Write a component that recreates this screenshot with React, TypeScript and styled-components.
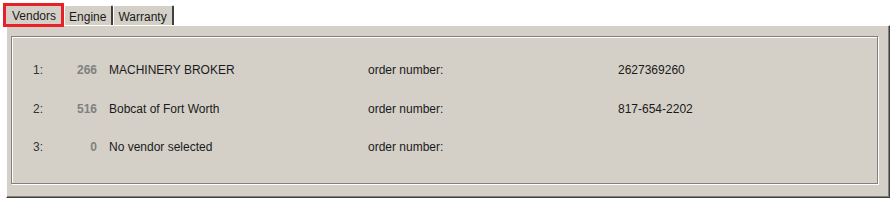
import React from 'react';
import styled, { createGlobalStyle } from 'styled-components';

const FACE = '#d4d0c8';
const SHADOW = '#808080';
const DARK = '#404040';

const GlobalStyle = createGlobalStyle`
    html, body {
        margin: 0;
        padding: 0;
        background: #fff;
        font-family: "Liberation Sans", Arial, sans-serif;
        font-size: 12px;
        color: #1a1a1a;
    }
`;

const Page = styled.div`
    width: 894px;
    height: 201px;
    padding-top: 3px;
    box-sizing: border-box;
`;

const TabStrip = styled.div`
    display: flex;
    align-items: flex-end;
    height: 22px;
    padding-left: 3px;
    position: relative;
    z-index: 1;
`;

const Tab = styled.div<{ $active?: boolean }>`
    box-sizing: border-box;
    height: ${p => (p.$active ? '24px' : '20px')};
    margin-bottom: ${p => (p.$active ? '-2px' : '0')};
    padding: ${p => (p.$active ? '3px 5px 0 6px' : '4px 5px 0 4px')};
    background: ${FACE};
    border-left: 1px solid #fff;
    border-top: 1px solid #fff;
    border-right: 2px solid ${DARK};
    border-radius: 2px 2px 0 0;
    line-height: 14px;
    white-space: nowrap;
    ${p => p.$active && `
        border: 3px solid #e8202a;
        border-radius: 0;
    `}
`;

const Panel = styled.div`
    margin-left: 6px;
    width: 884px;
    height: 173px;
    box-sizing: border-box;
    background: ${FACE};
    border-top: 1px solid #fff;
    border-left: 1px solid #fff;
    border-right: 1px solid ${DARK};
    border-bottom: 1px solid ${DARK};
    box-shadow: inset -1px -1px 0 ${SHADOW};
    padding: 10px 0 0 4px;
`;

const GroupBox = styled.div`
    width: 867px;
    height: 148px;
    box-sizing: border-box;
    border: 1px solid ${SHADOW};
    box-shadow: 1px 1px 0 #fff, inset 1px 1px 0 #fff;
    padding: 23px 0 0 21px;
    display: flex;
    flex-direction: column;
    gap: 18.5px;
`;

const Row = styled.div`
    display: grid;
    grid-template-columns: 27px 37px 271px 250px 1fr;
    height: 20px;
    align-items: center;
`;

const Index = styled.span`
    color: #333;
`;

const VendorId = styled.span`
    font-weight: bold;
    color: ${SHADOW};
    text-align: right;
`;

const Name = styled.span`
    padding-left: 12px;
`;

const Label = styled.span``;

const Value = styled.span``;

const vendors = [
    { idx: '1:', id: '266', name: 'MACHINERY BROKER', order: '2627369260' },
    { idx: '2:', id: '516', name: 'Bobcat of Fort Worth', order: '817-654-2202' },
    { idx: '3:', id: '0', name: 'No vendor selected', order: '' },
];

export default function App() {
    return (
        <Page>
            <GlobalStyle />
            <TabStrip>
                <Tab $active>Vendors</Tab>
                <Tab>Engine</Tab>
                <Tab>Warranty</Tab>
            </TabStrip>
            <Panel>
                <GroupBox>
                    {vendors.map(v => (
                        <Row key={v.idx}>
                            <Index>{v.idx}</Index>
                            <VendorId>{v.id}</VendorId>
                            <Name>{v.name}</Name>
                            <Label>order number:</Label>
                            <Value>{v.order}</Value>
                        </Row>
                    ))}
                </GroupBox>
            </Panel>
        </Page>
    );
}
